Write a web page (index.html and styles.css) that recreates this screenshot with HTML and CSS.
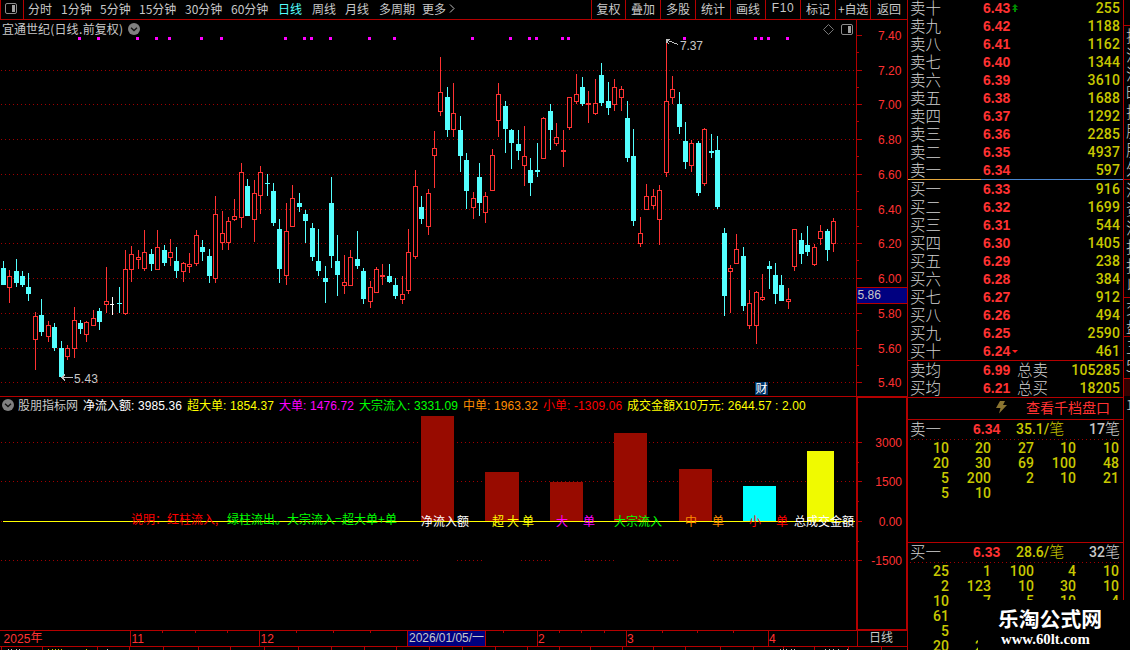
FILE: index.html
```html
<!DOCTYPE html>
<html lang="zh-CN">
<head>
<meta charset="utf-8">
<title>宜通世纪 日线</title>
<link rel="stylesheet" href="styles.css">
</head>
<body>
<div class="terminal">
  <main class="left">
    <nav class="toolbar">
      <span class="panel-toggle"><svg width="12" height="12" viewBox="0 0 12 12"><rect x=".5" y=".5" width="11" height="10" rx="1.5" fill="none" stroke="#8c8c8c"/><rect x="7" y="2" width="3" height="7" fill="#a0a0a0"/></svg></span>
      <span class="periods">
        <a class="w33">分时</a><a class="w39">1分钟</a><a class="w39">5分钟</a><a class="w46">15分钟</a><a class="w46">30分钟</a><a class="w47">60分钟</a><a class="w34 active">日线</a><a class="w33">周线</a><a class="w34">月线</a><a class="w43">多周期</a><a class="w46">更多<svg width="10" height="9" viewBox="0 0 10 9"><path d="M4 .5 8 4.5 4 8.5" fill="none" stroke="#c0c0c0"/></svg></a>
      </span>
      <span class="tools"><a>复权</a><a>叠加</a><a>多股</a><a>统计</a><a>画线</a><a class="latin">F10</a><a>标记</a><a>+自选</a><a>返回</a></span>
    </nav>

    <section class="pane price">
      <svg id="price-plot" width="856" height="376" viewBox="0 20 856 376" shape-rendering="crispEdges"></svg>
      <svg id="price-axis" class="axis" width="52" height="376" viewBox="856 20 52 376" shape-rendering="crispEdges"></svg>
      <div class="title"><span>宜通世纪<i>(</i>日线<i>.</i>前复权<i>)</i></span>
        <svg width="12" height="12" viewBox="0 0 12 12"><circle cx="6" cy="6" r="6" fill="#808080"/><path d="M3 4.8 6 7.6 9 4.8" fill="none" stroke="#111" stroke-width="1.3"/></svg>
      </div>
      <div class="corner">
        <svg width="11" height="11" viewBox="0 0 11 11"><path d="M5.5.5 10.5 5.5 5.5 10.5.5 5.5Z" fill="none" stroke="#777"/></svg>
        <svg width="12" height="12" viewBox="0 0 12 12"><rect x=".5" y=".5" width="11" height="10" rx="1.5" fill="none" stroke="#8c8c8c"/><rect x="7" y="2" width="3" height="7" fill="#a0a0a0"/></svg>
      </div>
    </section>

    <section class="pane flow">
      <svg id="flow-plot" width="856" height="233" viewBox="0 397 856 233" shape-rendering="crispEdges"></svg>
      <svg id="flow-axis" class="axis" width="52" height="234" viewBox="856 396 52 234" shape-rendering="crispEdges"></svg>
      <div class="legend">
        <svg width="12" height="12" viewBox="0 0 12 12"><circle cx="6" cy="6" r="6" fill="#808080"/><path d="M3 4.8 6 7.6 9 4.8" fill="none" stroke="#111" stroke-width="1.3"/></svg>
        <span class="l-name">股朋指标网</span>
        <span class="l-net">净流入额<b>: 3985.36</b></span>
        <span class="l-xl">超大单<b>: 1854.37</b></span>
        <span class="l-lg">大单<b>: 1476.72</b></span>
        <span class="l-bulk">大宗流入<b>: 3331.09</b></span>
        <span class="l-mid">中单<b>: 1963.32</b></span>
        <span class="l-sm">小单<b>: -1309.06</b></span>
        <span class="l-amt">成交金額<b>X10</b>万元<b>: 2644.57</b></span>
        <span class="l-two"><b>: 2.00</b></span>
      </div>
    </section>

    <footer class="timeline">
      <svg id="time-axis" width="908" height="20" viewBox="0 630 908 20" shape-rendering="crispEdges"></svg>
    </footer>
  </main>

  <aside class="book">
    <div class="levels" id="asks"></div>
    <div class="split"></div>
    <div class="levels bids" id="bids"></div>
    <div class="averages">
      <div class="avg"><span class="name">卖均</span><span class="p">6.99</span><span class="name">总卖</span><span class="v">105285</span></div>
      <div class="avg"><span class="name">买均</span><span class="p">6.21</span><span class="name">总买</span><span class="v">18205</span></div>
    </div>
    <div class="deep"><svg width="13" height="13" viewBox="0 0 13 13"><path d="M5 0H10L8 4H12L4 12.5 5.5 7H1Z" fill="#8a7430"/></svg><span>查看千档盘口</span></div>
    <div class="queue sell">
      <div class="qhead"><span class="name">卖一</span><span class="p">6.34</span><span class="y">35.1/<em>笔</em></span><span class="c">17<em>笔</em></span></div>
      <div class="qgrid"><i>10</i><i>20</i><i>27</i><i>10</i><i>10</i><i>20</i><i>30</i><i>69</i><i>100</i><i>48</i><i>5</i><i>200</i><i>2</i><i>10</i><i>21</i><i>5</i><i>10</i></div>
    </div>
    <div class="queue buy">
      <div class="qhead"><span class="name">买一</span><span class="p">6.33</span><span class="y">28.6/<em>笔</em></span><span class="c">32<em>笔</em></span></div>
      <div class="qgrid"><i>25</i><i>1</i><i>100</i><i>4</i><i>10</i><i>2</i><i>123</i><i>10</i><i>30</i><i>10</i><i>10</i><i>7</i><i>5</i><i>10</i><i>4</i><i>61</i><i></i><i></i><i></i><i></i><i>5</i><i></i><i></i><i></i><i></i><i>20</i><i>20</i></div>
    </div>
  </aside>

  <aside class="strip">
    <div class="s1"></div>
    <div class="s2"><span>换</span><span>流</span><span>流</span><span>昨</span><span>振</span><span>股</span><span>股</span><span>外</span></div>
    <div class="s3"><span>流</span><span>资</span><span>流</span><span>投</span><span>投</span><span>以</span></div>
    <div class="s4"><span>交</span><span>盘</span></div>
    <div class="s5"><span>五</span><span>5</span></div>
    <div class="s6"></div>
    <div class="s7"><span>1</span></div>
  </aside>

  <div class="brand"><strong>乐淘公式网</strong><span>www.60lt.com</span></div>
</div>
<script src="chart.js"></script>
</body>
</html>
```
FILE: styles.css
```css
* { box-sizing: border-box; }
body {
  margin: 0;
  background: #000;
  color: #c8c8c8;
  font: 12px/18px "Noto Sans CJK SC", sans-serif;
  overflow: hidden;
}
svg { display: block; flex: none; }
.terminal {
  position: relative;
  display: grid;
  grid-template-columns: 907px 217px 6px;
  width: 1130px;
  height: 650px;
  overflow: hidden;
}
.left { display: flex; flex-direction: column; min-width: 0; }

/* toolbar */
.toolbar {
  display: flex;
  height: 20px;
  width: 908px;
  border-bottom: 1px solid #b40000;
  border-left: 1px solid #b40000;
  white-space: nowrap;
  line-height: 17px;
}
.panel-toggle { width: 23px; padding: 3px 0 0 4px; border-right: 1px solid #b40000; }
.periods { display: flex; padding-left: 4px; flex: 1; }
.periods .active { color: #54ffff; }
.periods a { display: flex; align-items: center; padding-bottom: 2px; }
.w33 { width: 33px; } .w34 { width: 34px; } .w39 { width: 39px; }
.w43 { width: 43px; } .w46 { width: 46px; } .w47 { width: 47px; }
.tools { display: flex; }
.tools a { width: 35px; border-left: 1px solid #b40000; text-align: center; }
.tools a:nth-child(1) { width: 34px; }
.tools a:nth-child(8) { letter-spacing: -.3px; }
.tools a:last-child { width: 38px; border-right: 1px solid #b40000; }
.latin { font-family: "Liberation Sans", sans-serif; letter-spacing: .6px; }

/* chart panes */
.pane { position: relative; display: flex; width: 908px; }
.price { height: 377px; border-bottom: 1px solid #b40000; }
.flow { height: 233px; }
.flow .axis { margin-top: -1px; }
.title { position: absolute; left: 2px; top: 0; display: flex; align-items: center; gap: 5px; }
.title i { font-style: normal; display: inline-block; width: 4.4px; text-align: center; }
.title span { white-space: nowrap; }
.corner { position: absolute; left: 823px; top: 4px; display: flex; gap: 7px; }
.legend { position: absolute; left: 2px; top: -1px; display: flex; align-items: center; white-space: nowrap; }
.legend span { flex: none; }
.legend b { font: 12px "Liberation Sans", sans-serif; letter-spacing: .12px; }
.l-name { width: 65px; margin-left: 4px; }
.l-net { width: 104px; color: #fff; }
.l-xl { width: 92px; color: #ff0; }
.l-lg { width: 80px; color: #f0f; }
.l-bulk { width: 104px; color: #0f0; }
.l-mid { width: 80px; color: #ff8c00; }
.l-sm { width: 84px; color: #f00; }
.l-amt { width: 148px; color: #ff0; }
.l-two { color: #ff0; }
.timeline { height: 20px; width: 908px; }

/* order book */
.book {
  border-left: 1px solid #b40000;
  border-right: 1px solid #b40000;
  width: 217px;
  height: 650px;
  overflow: hidden;
  font: 500 14px/18px Roboto, "Liberation Sans", sans-serif;
  color: #c8c800;
}
.name, .book em { font: 15.5px/16px "Noto Sans CJK SC", sans-serif; font-weight: 300; color: #d2d2d2; }
.levels { margin-top: -1px; height: 180px; }
.bids { margin-top: 0; }
.level { display: grid; grid-template-columns: 73px 29px 8px 1fr; height: 18px; padding: 0 3px 0 2px; }
.level svg { margin-top: 5px; }
.level .v, .avg .v { text-align: right; grid-column: 4; letter-spacing: .15px; }
.p { color: #ff3232; font: bold 14px/18px "Liberation Sans", sans-serif; }
.split { height: 1px; background: linear-gradient(90deg, #e6a83c 73px, #4a86d0 73px); }
.averages { border-top: 1px solid #b40000; height: 37px; padding: 0 3px 0 2px; }
.avg { display: grid; grid-template-columns: 73px 34px 40px 1fr; height: 18px; }
.deep { display: flex; align-items: center; height: 22px; border-top: 1px solid #b40000; padding: 0 0 3px 87px; color: #ff3232; font: 14px/18px "Noto Sans CJK SC", sans-serif; gap: 18px; }
.queue { border-top: 1px solid #b40000; }
.sell { height: 123px; }
.qhead {
  display: grid; grid-template-columns: 63px 43px 1fr auto; height: 20px; padding: 0 3px 0 2px; line-height: 18px;
  background: repeating-linear-gradient(90deg, #a00000 0 1px, transparent 1px 4px) 2px 19px / 212px 1px no-repeat;
}
.qhead .name { line-height: 17px; }
.qhead .c { color: #c8c8c8; }
.qhead em { font-size: 15px; }
.qhead .y em { color: #c8c800; }
.qgrid { display: grid; grid-template-columns: 41px 42px 43px 42px 43px; grid-auto-rows: 15px; line-height: 16px; }
.qgrid i { font-style: normal; text-align: right; white-space: nowrap; letter-spacing: .1px; }

/* neighbouring column, cut by the window edge */
.strip { overflow: hidden; font: 300 16px/18px "Noto Sans CJK SC", sans-serif; }
.strip div { border-top: 1px solid #b40000; width: 20px; padding-left: 2px; overflow: hidden; }
.strip span { display: block; height: 19px; }
.strip .s1 { height: 25px; border: 0; }
.s2 { height: 154px; } .s3 { height: 118px; } .s4 { height: 39px; }
.s5 { height: 42px; } .strip .s6 { height: 18px; background: #300; } .strip .s7 { border: 0; font-size: 13px; }

.brand {
  position: absolute; left: 978px; top: 600px; width: 152px; height: 50px;
  background: #000; color: #fff; padding-left: 20px;
}
.brand strong { display: block; font: bold 20.8px/24px "Noto Sans CJK SC", sans-serif; margin-top: 6px; white-space: nowrap; }
.brand span { display: block; font: bold 14.8px/15px "Liberation Serif", serif; margin: 2px 0 0 3px; }
```
FILE: chart.js
```js
const LINE = '#b40000', GRID = '#a00000', UP = '#ff3232', DOWN = '#54ffff';
const CJK = "'Noto Sans CJK SC', sans-serif", NUM = "'Liberation Sans', sans-serif";
const rect = (x, y, w, h, f) => `<rect x="${x}" y="${y}" width="${w}" height="${h}" fill="${f}"/>`;
const text = (x, y, s, f, o = {}) =>
  `<text x="${x}" y="${y}" fill="${f}" font-family="${o.font || NUM}" font-size="${o.size || 12}" text-anchor="${o.anchor || 'start'}"` +
  (o.len ? ` textLength="${o.len}"` : '') + `>${s}</text>`;
const dots = (y, x0 = 1, x1 = 855) =>
  `<line x1="${x0}" x2="${x1}" y1="${y + .5}" y2="${y + .5}" stroke="${GRID}" stroke-dasharray="1 3"/>`;

// kind, centre x, wick top, wick bottom, body top, body bottom
const candles = `
d3 261 285 268 285|u9 270 303 276 288|d16 259 287 271 283|d22 271 287 276 285|d28 273 301 287 294
u35 312 370 316 340|d41 299 336 315 332|u48 321 342 325 337|d54 323 351 327 348|d61 341 377 348 377
u67 345 360 348 357|u74 307 358 320 349|d80 320 334 323 329|u86 321 342 322 335|u93 310 326 318 326
d99 308 330 311 322|u106 267 313 301 305|w112 297 315 304 305|d119 287 313 303 304|u125 250 315 269 314
u131 246 282 254 270|u138 250 269 257 260|u144 230 271 252 269|d151 249 271 254 264|u157 230 270 247 270
d164 245 266 250 263|u170 239 266 252 258|d176 247 278 261 271|u183 262 282 263 272|u189 253 273 264 267
u196 230 266 235 264|d202 240 261 247 252|d209 249 283 256 276|u215 196 283 214 279|u222 211 250 233 243
u228 217 250 221 243|u234 199 221 216 220|u241 163 228 172 218|d247 179 216 186 216|u254 180 242 193 220
u260 166 214 172 196|d267 174 196 183 184|d273 183 226 191 223|d279 219 283 229 269|u286 203 285 231 276
u292 185 227 198 227|d299 193 212 203 207|d305 210 243 214 221|d312 223 261 228 257|d318 229 276 261 271
d325 266 303 278 282|d331 177 268 203 256|d337 235 296 261 275|u344 255 294 282 286|u350 250 286 257 286
d357 231 269 259 266|d363 268 304 271 299|u370 281 308 287 302|u376 267 293 269 293|u382 264 285 275 277
d389 264 283 276 282|d395 278 299 285 296|u402 276 304 294 300|u408 229 294 252 291|u415 170 259 186 257
d421 196 224 207 219|u428 189 235 193 227|u434 131 188 148 156|u440 57 116 92 112|d447 87 137 97 130
u453 83 137 113 130|d460 116 172 130 156|d466 153 209 160 191|u473 192 219 198 208|d479 163 216 177 203
u485 192 223 196 213|u492 149 191 155 191|u498 83 137 94 121|d505 101 153 106 129|d511 129 169 130 143
d518 130 160 144 151|u524 126 186 156 166|d530 158 196 170 183|d537 143 177 170 172|u543 117 159 118 159
d550 104 150 111 130|u556 123 146 137 144|u563 130 167 150 152|u569 97 130 97 128|u576 74 104 94 102
d582 77 106 87 104|u588 91 123 103 105|u595 79 115 103 114|d601 63 106 75 103|d608 82 115 101 108
u614 79 111 87 105|u621 86 111 89 98|d627 101 162 118 158|d633 129 226 156 221|u640 217 247 233 244
u646 184 210 196 210|u653 189 209 196 206|u659 185 245 190 220|u666 43 177 101 173|u672 76 104 89 98
d679 92 134 104 127|d685 122 169 141 162|u691 140 172 143 166|d698 141 196 143 193|u704 128 186 129 184
d711 134 158 151 153|d717 136 209 150 207|d724 228 316 233 296|u730 265 313 268 272|u736 234 264 249 264
d743 247 311 256 306|u749 290 329 303 326|u756 291 344 292 326|u762 274 301 297 300|d769 261 289 266 269
d775 263 304 275 294|d781 275 301 285 301|u788 288 309 299 302|u794 229 271 229 267|d801 233 264 240 254
d807 226 256 245 252|u814 244 266 247 265|u820 225 245 231 239|d827 229 261 231 250|u833 218 252 221 244`
  .trim().split(/[|\n]/);

let s = [70, 104, 139, 174, 209, 243, 278, 313, 348, 382].map(y => dots(y)).join('');
for (const c of candles) {
  const kind = c[0], [x, wt, wb, t, b] = c.slice(1).split(' ').map(Number);
  const color = kind === 'u' ? UP : kind === 'd' ? DOWN : '#fff';
  s += rect(x, wt, 1, wb - wt, color) + rect(x - 2, t, kind === 'w' ? 4 : 5, b - t, color);
  if (kind === 'u' && b - t > 2) s += rect(x - 1, t + 1, 3, b - t - 2, '#000');
}
for (const x of [78, 97, 136, 155, 168, 200, 220, 284, 303, 310, 329, 368, 393, 471, 509, 528, 535, 561, 567, 683, 754, 760, 767, 786])
  s += rect(x, 37, 3, 3, '#f0f');
s += `<g fill="none" stroke="#c0c0c0"><path d="M61 377.5H73M65 374.5 62 377.5 65 380.5"/><path d="M666.5 43V40L678 44.5M667 39.5H670M667 41.5 669 44"/></g>`;
s += text(74, 383, '5.43', '#c8c8c8', { len: 24 }) + text(680, 50, '7.37', '#c8c8c8', { len: 23 });
s += rect(755, 382, 13, 13, '#003468') + text(755.5, 393, '财', '#fff', { font: CJK });
document.getElementById('price-plot').innerHTML = s;

s = rect(856, 20, 1, 376, LINE) + rect(907, 20, 1, 376, LINE);
const marks = [['7.40', 35], ['7.20', 70], ['7.00', 104], ['6.80', 139], ['6.60', 174], ['6.40', 209], ['6.20', 243], ['6.00', 278], ['5.80', 313], ['5.60', 348], ['5.40', 382]];
for (const [label, y] of marks) {
  s += rect(857, y, 5, 1, LINE) + text(878, y + 5, label, UP, { len: 23.5 });
  if (y < 380) s += rect(857, y + 17, 2, 1, LINE);
}
s += rect(857, 287, 50, 17, LINE) + rect(857, 288, 50, 15, '#000080') + text(857.5, 299, '5.86', '#c8c8c8', { len: 23.5 });
document.getElementById('price-axis').innerHTML = s;

s = dots(442) + dots(481) + dots(521);
for (const [a, b] of [[1, 418], [457, 482], [521, 550], [585, 614], [649, 678], [713, 855]]) s += dots(560, a, b);
for (const [x, y, w, f] of [[421, 416, 33, '#980b00'], [485, 472, 34, '#980b00'], [550, 482, 33, '#980b00'], [614, 433, 33, '#980b00'], [679, 469, 33, '#980b00'], [743, 486, 33, '#0ff'], [807, 451, 27, '#f0fa00']])
  s += rect(x, y, w, 521 - y, f);
s += rect(3, 521, 852, 1, '#ff0');
for (const [x, y, t, f] of [
  [131, 524, '说明：', '#f00'], [167, 524, '红柱流入,', '#f00'], [227, 524, '绿柱流出。', '#0f0'], [287, 524, '大宗流入', '#0f0'],
  [335, 524, '=', '#0f0'], [342, 524, '超大单', '#0f0'], [378, 524, '+', '#0f0'], [385, 524, '单', '#0f0'],
  [421, 526, '净流入额', '#fff'], [492, 526, '超', '#ff0'], [507, 526, '大', '#ff0'], [522, 526, '单', '#ff0'],
  [556, 526, '大', '#f0f'], [583, 526, '单', '#f0f'], [614, 526, '大宗流入', '#0f0'], [685, 526, '中', '#ff8c00'],
  [712, 526, '单', '#ff8c00'], [749, 526, '小', '#f00'], [776, 526, '单', '#f00'], [794, 526, '总成交金額', '#fff']])
  s += text(x, y, t, f, { font: CJK });
document.getElementById('flow-plot').innerHTML = s;

s = rect(856, 396, 52, 2, LINE) + rect(856, 396, 2, 234, LINE) + rect(906, 396, 2, 234, LINE) + rect(856, 629, 52, 1, LINE);
for (const [label, y] of [['3000', 442], ['1500', 481], ['0.00', 521], ['-1500', 560]])
  s += rect(858, y, 4, 1, LINE) + (y < 560 ? rect(858, y + 20, 1, 1, LINE) : '') + text(902, y + 5, label, UP, { anchor: 'end' });
document.getElementById('flow-axis').innerHTML = s;

s = rect(0, 630, 908, 1, LINE) + rect(0, 646, 908, 1, LINE) + rect(857, 630, 1, 17, LINE) + rect(907, 630, 1, 20, LINE);
for (const x of [130, 259, 537, 626, 768]) s += rect(x, 631, 1, 15, LINE);
for (const x of [162, 195, 227, 296, 333, 370, 503, 559, 581, 604, 662, 697, 733]) s += rect(x, 631, 1, 2, LINE);
for (const x of [1, 42, 97, 129, 163, 198, 230, 264, 298, 331, 364, 396, 429, 462, 495, 527, 559, 590, 622, 653, 685, 720, 753, 783, 814, 848, 881]) s += rect(x, 647, 1, 3, LINE);
for (const x of [8, 11, 16, 19, 107, 780, 783, 786, 791, 794, 825, 829, 833, 838, 847]) s += rect(x, 649, 1, 1, '#c0c0c0');
for (const x of [48, 52, 55, 58, 61, 86]) s += rect(x, 649, 1, 1, '#c8c800');
s += rect(407, 631, 79, 15, LINE) + rect(408, 631, 77, 15, '#000080');
s += text(3.5, 643, '2025', UP, { len: 27 }) + text(30.5, 642, '年', UP, { font: CJK });
s += text(131.5, 643, '11', UP) + text(260.5, 643, '12', UP) + text(538, 643, '2', UP) + text(627, 643, '3', UP) + text(769, 643, '4', UP);
s += text(409, 642, '2026/01/05/', '#c8c8c8', { len: 63 }) + text(472, 642, '一', '#c8c8c8', { font: CJK });
s += text(869, 642, '日线', '#c8c8c8', { font: CJK });
document.getElementById('time-axis').innerHTML = s;

const level = (n, p, v, mark = '') =>
  `<div class="level"><span class="name">${n}</span><span class="p">${p}</span><span>${mark}</span><span class="v">${v}</span></div>`;
const upMark = '<svg width="6" height="8" viewBox="0 0 6 8"><path d="M3 0 6 3H4V4L6 6H4V8H2V6H0L2 4V3H0Z" fill="#008c00"/></svg>';
const downMark = '<svg width="6" height="8" viewBox="0 0 6 8"><path d="M0 3H6L3 6Z" fill="#ff1e1e"/></svg>';
const digits = '一二三四五六七八九十';
const askVol = [597, 4937, 2285, 1292, 1688, 3610, 1344, 1162, 1188, 255];
const bidVol = [916, 1699, 544, 1405, 238, 384, 912, 494, 2590, 461];
document.getElementById('asks').innerHTML = askVol.map((v, i) => level('卖' + digits[i], (6.34 + i / 100).toFixed(2), v, i === 9 ? upMark : '')).reverse().join('');
document.getElementById('bids').innerHTML = bidVol.map((v, i) => level('买' + digits[i], (6.33 - i / 100).toFixed(2), v, i === 9 ? downMark : '')).join('');
```
